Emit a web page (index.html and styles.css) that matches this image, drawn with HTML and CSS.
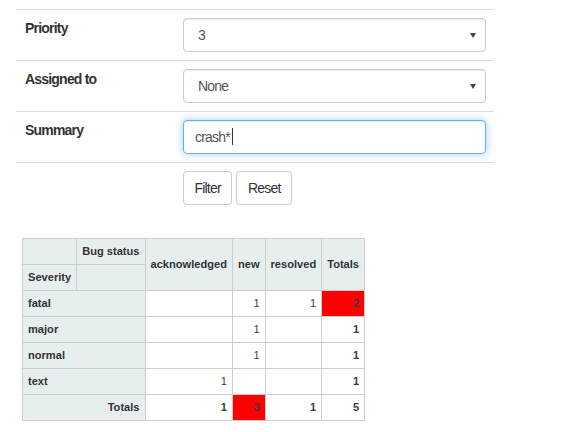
FILE: index.html
```html
<!DOCTYPE html>
<html lang="en">
<head>
    <meta charset="UTF-8">
    <meta name="viewport" content="width=device-width, initial-scale=1.0">
    <title>Bug report</title>
    <link rel="stylesheet" href="styles.css">
</head>
<body>
    <div class="container">
        <table class="filter-table">
            <tr>
                <th>Priority</th>
                <td>
                    <div class="select-wrap">
                        <select class="form-control"><option>3</option></select>
                    </div>
                </td>
            </tr>
            <tr>
                <th>Assigned to</th>
                <td>
                    <div class="select-wrap">
                        <select class="form-control"><option>None</option></select>
                    </div>
                </td>
            </tr>
            <tr>
                <th>Summary</th>
                <td>
                    <div class="form-control focused">crash*<span class="caret"></span></div>
                </td>
            </tr>
            <tr>
                <th></th>
                <td>
                    <button class="btn" type="button">Filter</button>
                    <button class="btn" type="button">Reset</button>
                </td>
            </tr>
        </table>

        <table class="pvtTable">
            <thead>
                <tr>
                    <th></th>
                    <th class="pvtAxisLabel">Bug status</th>
                    <th class="pvtColLabel" rowspan="2">acknowledged</th>
                    <th class="pvtColLabel" rowspan="2">new</th>
                    <th class="pvtColLabel" rowspan="2">resolved</th>
                    <th class="pvtTotalLabel" rowspan="2">Totals</th>
                </tr>
                <tr>
                    <th class="pvtAxisLabel">Severity</th>
                    <th></th>
                </tr>
            </thead>
            <tbody>
                <tr>
                    <th class="pvtRowLabel" colspan="2">fatal</th>
                    <td></td>
                    <td>1</td>
                    <td>1</td>
                    <td class="pvtTotal hot">2</td>
                </tr>
                <tr>
                    <th class="pvtRowLabel" colspan="2">major</th>
                    <td></td>
                    <td>1</td>
                    <td></td>
                    <td class="pvtTotal">1</td>
                </tr>
                <tr>
                    <th class="pvtRowLabel" colspan="2">normal</th>
                    <td></td>
                    <td>1</td>
                    <td></td>
                    <td class="pvtTotal">1</td>
                </tr>
                <tr>
                    <th class="pvtRowLabel" colspan="2">text</th>
                    <td>1</td>
                    <td></td>
                    <td></td>
                    <td class="pvtTotal">1</td>
                </tr>
                <tr>
                    <th class="pvtTotalLabel" colspan="2">Totals</th>
                    <td class="pvtTotal">1</td>
                    <td class="pvtTotal hot">3</td>
                    <td class="pvtTotal">1</td>
                    <td class="pvtGrandTotal">5</td>
                </tr>
            </tbody>
        </table>
    </div>
</body>
</html>
```

FILE: styles.css
```css
body {
    margin: 0;
    font-family: "Liberation Sans", Arial, sans-serif;
    font-size: 14px;
    line-height: 20px;
    color: #333;
    background: #fff;
}
.container {
    padding: 9px 0 0 16px;
}

/* filter form */
.filter-table {
    width: 478px;
    border-collapse: collapse;
    margin-bottom: 25px;
    letter-spacing: -0.8px;
}
.filter-table th,
.filter-table td {
    border-top: 1px solid #ddd;
    padding: 8px;
    vertical-align: top;
    text-align: left;
}
.filter-table th {
    width: 142px;
    font-weight: bold;
    padding-left: 9px;
}
.form-control {
    display: block;
    box-sizing: border-box;
    width: 100%;
    height: 34px;
    padding: 6px 12px;
    font-family: inherit;
    font-size: 14px;
    line-height: 20px;
    letter-spacing: inherit;
    color: #555;
    background: #fff;
    border: 1px solid #ccc;
    border-radius: 4px;
    box-shadow: inset 0 1px 1px rgba(0,0,0,0.075);
}
select.form-control {
    -webkit-appearance: none;
    appearance: none;
    padding-left: 14px;
}
.select-wrap {
    position: relative;
}
.select-wrap::after {
    content: "";
    position: absolute;
    right: 10px;
    top: 15px;
    border-left: 3px solid transparent;
    border-right: 3px solid transparent;
    border-top: 5px solid #444;
}
.form-control.focused {
    padding-left: 11px;
    border-color: #66afe9;
    box-shadow: inset 0 1px 1px rgba(0,0,0,0.075), 0 0 8px rgba(102,175,233,0.6);
}
.caret {
    display: inline-block;
    width: 1px;
    height: 17px;
    margin-left: 2px;
    background: #333;
    vertical-align: -3px;
}
.btn {
    box-sizing: border-box;
    height: 34px;
    padding: 6px 10.5px;
    font-family: inherit;
    font-size: 14px;
    line-height: 20px;
    letter-spacing: inherit;
    color: #333;
    background: #fff;
    border: 1px solid #ccc;
    border-radius: 4px;
    margin-right: 1px;
}

/* pivot table */
.pvtTable {
    font-family: "Liberation Sans", Arial, sans-serif;
    font-size: 11.1px;
    line-height: 15px;
    text-align: left;
    border-collapse: collapse;
    margin-left: 6px;
}
.pvtTable th {
    background-color: #e6eeee;
    border: 1px solid #cdcdcd;
    padding: 5px;
    color: #333;
    font-weight: bold;
    text-align: left;
}
.pvtTable .pvtColLabel {
    text-align: center;
}
.pvtTable .pvtTotalLabel {
    text-align: right;
}
.pvtTable td {
    color: #3d3d3d;
    padding: 5px;
    background-color: #fff;
    border: 1px solid #cdcdcd;
    vertical-align: top;
    text-align: right;
}
.pvtTable .pvtTotal,
.pvtTable .pvtGrandTotal {
    font-weight: bold;
}
.pvtTable td.hot {
    background-color: #ff0000;
}
```
